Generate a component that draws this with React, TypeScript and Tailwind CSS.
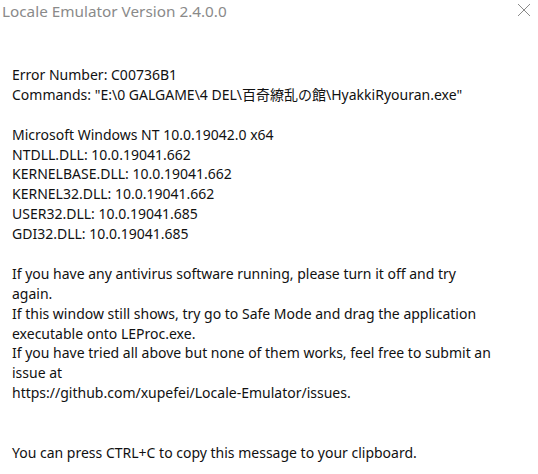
import React from 'react';

const lines: string[] = [
  'Error Number: C00736B1',
  'Commands: "E:\\0 GALGAME\\4 DEL\\百奇繚乱の館\\HyakkiRyouran.exe"',
  '',
  'Microsoft Windows NT 10.0.19042.0 x64',
  'NTDLL.DLL: 10.0.19041.662',
  'KERNELBASE.DLL: 10.0.19041.662',
  'KERNEL32.DLL: 10.0.19041.662',
  'USER32.DLL: 10.0.19041.685',
  'GDI32.DLL: 10.0.19041.685',
  '',
  'If you have any antivirus software running, please turn it off and try',
  'again.',
  'If this window still shows, try go to Safe Mode and drag the application',
  'executable onto LEProc.exe.',
  'If you have tried all above but none of them works, feel free to submit an',
  'issue at',
  'https://github.com/xupefei/Locale-Emulator/issues.',
  '',
  '',
  'You can press CTRL+C to copy this message to your clipboard.',
];

export default function App() {
  return (
    <div className="w-[538px] h-[474px] bg-white overflow-hidden relative font-['Noto_Sans','Noto_Sans_CJK_JP',sans-serif]">
      <div className="flex items-start justify-between h-[24px]">
        <div className="pl-[2px] pt-[1px] text-[15.3px] leading-[20px] text-[#8a8a8a]">Locale Emulator Version 2.4.0.0</div>
        <button className="mr-[7px] mt-[3px] w-[14px] h-[14px] text-[#8a8a8a]">
          <svg width="14" height="14" viewBox="0 0 14 14" fill="none" stroke="currentColor" strokeWidth="1">
            <path d="M1 1L13 13M13 1L1 13" />
          </svg>
        </button>
      </div>
      <div className="pl-[12px] pt-[41px] text-[14px] leading-[19.9px] text-[#111]">
        {lines.map((l, i) => (
          <div key={i} className="whitespace-pre h-[19.9px]">{l}</div>
        ))}
      </div>
    </div>
  );
}
